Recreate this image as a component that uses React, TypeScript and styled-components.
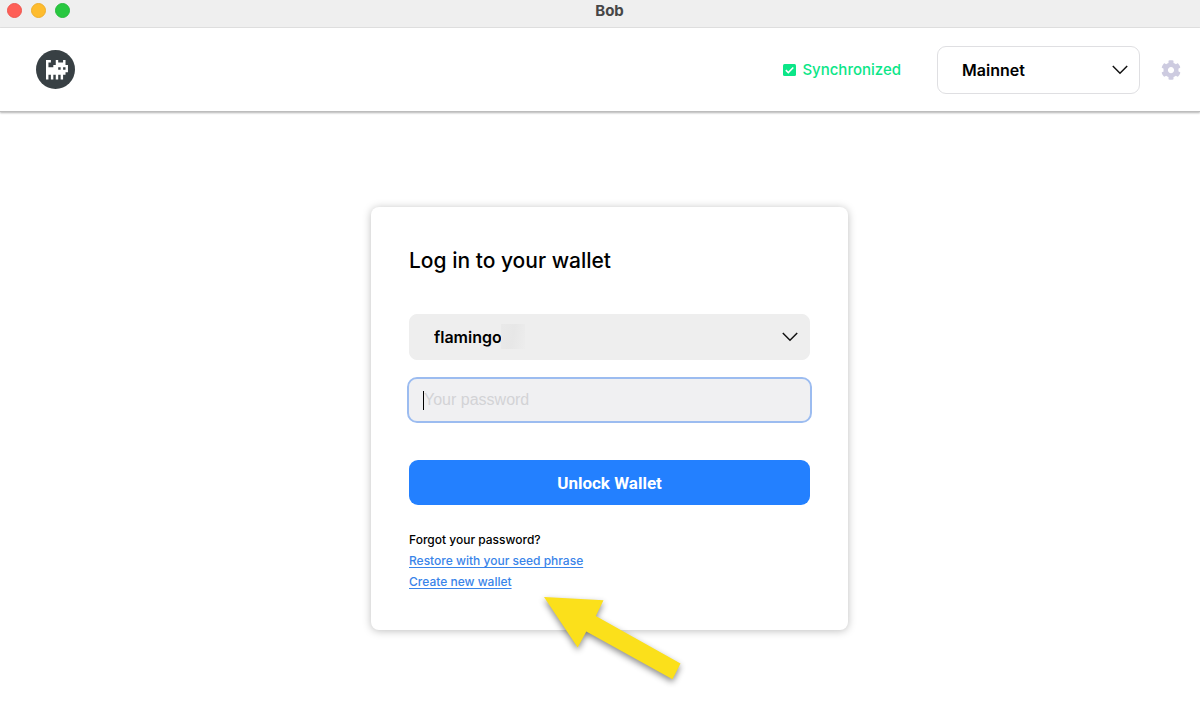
import React from "react";
import styled, { createGlobalStyle } from "styled-components";
import { FaCog } from "react-icons/fa";

const GlobalStyle = createGlobalStyle`
  *, *::before, *::after { box-sizing: border-box; }
  html, body { margin: 0; }
  body {
    background: #ffffff;
    color: #000000;
    font-family: Inter, "Liberation Sans", sans-serif;
    overflow-x: hidden;
  }
`;

const Window = styled.div`
  display: flex;
  flex-direction: column;
  min-height: 100vh;
`;

const TitleBar = styled.div`
  display: grid;
  grid-template-columns: 90px 1fr 78px;
  align-items: center;
  height: 28px;
  padding: 0 0 6px 7px;
  background: #efefef;
  border-bottom: 1px solid #e3e3e3;
`;

const Lights = styled.div`
  display: flex;
  gap: 9px;
`;

const Light = styled.button<{ $fill: string; $edge: string }>`
  width: 15px;
  height: 15px;
  padding: 0;
  border: 1px solid ${(p) => p.$edge};
  border-radius: 50%;
  background: ${(p) => p.$fill};
`;

const WindowTitle = styled.div`
  color: #464646;
  font-size: 15px;
  font-weight: 700;
  line-height: 20px;
  text-align: center;
`;

const Header = styled.header`
  display: flex;
  align-items: center;
  height: 84px;
  padding: 0 19px 0 36px;
  background: #ffffff;
  border-bottom: 1px solid #bdbdbd;
  box-shadow: 0 1px 2px rgba(0, 0, 0, 0.3);
`;

const LogoSvg = styled.svg`
  width: 39px;
  height: 39px;
  margin-right: auto;
`;

const SyncStatus = styled.div`
  display: flex;
  align-items: center;
  gap: 6px;
  margin-right: 36px;
  color: #0be688;
  font-size: 15px;
  font-weight: 500;
  line-height: 20px;
`;

const SelectWrap = styled.div<{ $width: string }>`
  display: grid;
  align-items: center;
  position: relative;
  width: ${(p) => p.$width};

  & > * { grid-area: 1 / 1; }
`;

const Select = styled.select<{ $filled?: boolean }>`
  appearance: none;
  width: 100%;
  height: ${(p) => (p.$filled ? "46px" : "48px")};
  padding: 0 48px 0 24px;
  border: 1px solid ${(p) => (p.$filled ? "#eeeeee" : "#dfdfe2")};
  border-radius: ${(p) => (p.$filled ? "8px" : "9px")};
  background: ${(p) => (p.$filled ? "#eeeeee" : "#ffffff")};
  color: #000000;
  font-family: inherit;
  font-size: 16px;
  font-weight: 600;
`;

const ChevronSvg = styled.svg`
  justify-self: end;
  width: 16px;
  height: 10px;
  margin-right: 12px;
  pointer-events: none;
`;

const IconButton = styled.button`
  display: flex;
  margin-left: 21px;
  padding: 0;
  border: 0;
  background: none;
  color: #cdcbe0;
`;

const Main = styled.main`
  display: flex;
  flex: 1;
  align-items: flex-start;
  justify-content: center;
  padding: 95px 0 88px 19px;
`;

const Card = styled.form`
  position: relative;
  display: flex;
  flex-direction: column;
  width: 477px;
  max-width: 100%;
  padding: 40px 38px 38px;
  border-radius: 8px;
  background: #ffffff;
  box-shadow: 0 1px 8px rgba(0, 0, 0, 0.26);
`;

const Heading = styled.h1`
  margin: 0 0 39px;
  font-size: 21px;
  font-weight: 500;
  line-height: 28px;
`;

const Redaction = styled.span`
  position: absolute;
  left: 92px;
  top: 10px;
  width: 24px;
  height: 25px;
  background: linear-gradient(100deg, #e9e9e9, #e7e7e7 50%, #ededed);
`;

const PasswordWrap = styled.div`
  position: relative;
  display: flex;
  margin: 19px 0 39px;
`;

const PasswordInput = styled.input`
  width: 100%;
  height: 42px;
  padding: 0 15px;
  border: 0;
  border-radius: 8px;
  outline: 2px solid #9cbcf0;
  background: #f0f0f2;
  font-family: "Liberation Sans", Arial, sans-serif;
  font-size: 16px;

  &::placeholder { color: #d3d3d6; opacity: 1; }
`;

const Caret = styled.span`
  position: absolute;
  left: 14px;
  top: 12px;
  width: 1px;
  height: 19px;
  background: #000000;
`;

const UnlockButton = styled.button`
  height: 45px;
  border: 0;
  border-radius: 9px;
  background: #2380ff;
  color: #ffffff;
  font-family: Roboto, "Liberation Sans", sans-serif;
  font-size: 17px;
  font-weight: 700;
`;

const Help = styled.div`
  display: flex;
  flex-direction: column;
  align-items: flex-start;
  margin-top: 24px;
  font-size: 12px;
  font-weight: 500;
  line-height: 21px;
`;

const HelpLink = styled.a`
  color: #3984e9;
  text-decoration: underline;
  text-underline-offset: 2px;
`;

const Arrow = styled.svg`
  position: absolute;
  left: 163px;
  top: 380px;
  width: 160px;
  height: 106px;
  overflow: visible;
  pointer-events: none;
  filter: drop-shadow(0 3px 3px rgba(0, 0, 0, 0.45));
`;

// The cat, one string per row of pixels.
const CAT = [
  "##..#..#.",
  "#...####.",
  "#..######",
  "#####.#.#",
  "#########",
  "########.",
  "#.#.#.#..",
  "#.#.#.#..",
];

// Each pixel overlaps its right and lower neighbour a little, in one path, so that no seams show.
const catPath = CAT.flatMap((row, y) =>
  [...row].map((cell, x) => {
    if (cell !== "#") return "";
    const w = row[x + 1] === "#" ? 1.3 : 1;
    const h = CAT[y + 1]?.[x] === "#" ? 1.3 : 1;
    return `M${x} ${y}h${w}v1h${-w}zM${x} ${y}h1v${h}h-1z`;
  })
).join("");

const Logo = () => (
  <LogoSvg viewBox="0 0 39 39" role="img" aria-label="Bob">
    <circle cx="19.5" cy="19.5" r="19.5" fill="#384044" />
    <path d={catPath} fill="#fff" transform="translate(10 10) scale(2.44)" />
  </LogoSvg>
);

const Chevron = () => (
  <ChevronSvg viewBox="0 0 16 10" aria-hidden="true">
    <path d="M0.8 1L8 8.2L15.2 1" fill="none" stroke="#111" strokeWidth="1.5" />
  </ChevronSvg>
);

export default function App() {
  return (
    <Window>
      <GlobalStyle />
      <TitleBar>
        <Lights>
          <Light type="button" aria-label="Close" $fill="#fe5f57" $edge="#ee564f" />
          <Light type="button" aria-label="Minimize" $fill="#febc2e" $edge="#eeae2b" />
          <Light type="button" aria-label="Zoom" $fill="#28c840" $edge="#26ba3b" />
        </Lights>
        <WindowTitle>Bob</WindowTitle>
      </TitleBar>
      <Header>
        <Logo />
        <SyncStatus>
          <svg width="13" height="12" viewBox="0 0 13 12" aria-hidden="true">
            <rect width="13" height="12" rx="1.5" fill="#0be688" />
            <path d="M2.8 6.1L5.3 8.6L10.3 3.5" fill="none" stroke="#fff" strokeWidth="1.5" />
          </svg>
          Synchronized
        </SyncStatus>
        <SelectWrap $width="203px">
          <Select aria-label="Network" defaultValue="Mainnet">
            <option>Mainnet</option>
          </Select>
          <Chevron />
        </SelectWrap>
        <IconButton type="button" aria-label="Settings">
          <FaCog size={20} />
        </IconButton>
      </Header>
      <Main>
        <Card onSubmit={(e) => e.preventDefault()}>
          <Heading>Log in to your wallet</Heading>
          <SelectWrap $width="100%">
            <Select $filled aria-label="Wallet" defaultValue="flamingo">
              <option>flamingo</option>
            </Select>
            <Chevron />
            <Redaction />
          </SelectWrap>
          <PasswordWrap>
            <PasswordInput type="password" aria-label="Your password" placeholder="Your password" />
            <Caret />
          </PasswordWrap>
          <UnlockButton type="submit">Unlock Wallet</UnlockButton>
          <Help>
            <span>Forgot your password?</span>
            <HelpLink href="#restore">Restore with your seed phrase</HelpLink>
            <HelpLink href="#create">Create new wallet</HelpLink>
          </Help>
          <Arrow viewBox="534 587 160 106" aria-hidden="true">
            <path
              d="M544 597L603.5 600.2L595.8 616L680.5 663.5L672.5 679.3L586.3 631.6L577.7 647.5Z"
              fill="#fbe01b"
            />
          </Arrow>
        </Card>
      </Main>
    </Window>
  );
}
